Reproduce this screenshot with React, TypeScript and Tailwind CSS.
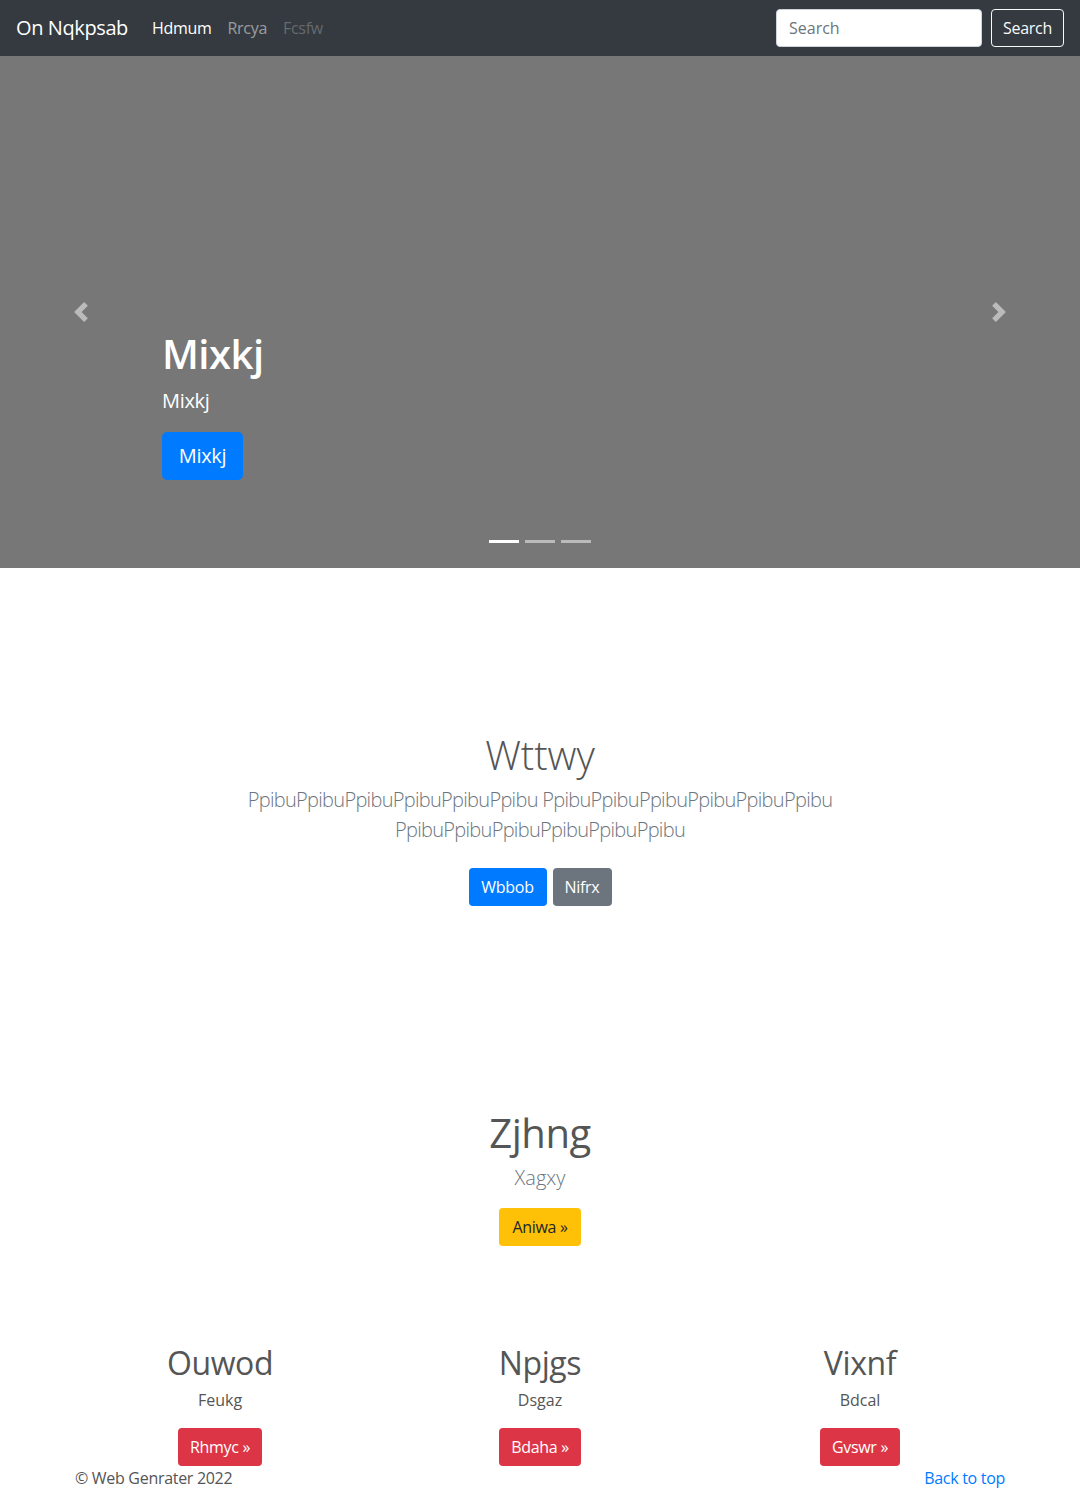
import React from "react";

const font = { fontFamily: '"Open Sans", "Noto Sans", Arial, sans-serif' };

function Chevron({ dir }: { dir: "prev" | "next" }) {
  return (
    <svg width="20" height="20" viewBox="0 0 8 8" fill="#fff">
      {dir === "prev" ? (
        <path d="M5.25 0l-4 4 4 4 1.5-1.5L4.25 4l2.5-2.5L5.25 0z" />
      ) : (
        <path d="M2.75 0l-1.5 1.5L3.75 4l-2.5 2.5L2.75 8l4-4-4-4z" />
      )}
    </svg>
  );
}

export default function App() {
  const cols = [
    { title: "Ouwod", text: "Feukg", btn: "Rhmyc" },
    { title: "Npjgs", text: "Dsgaz", btn: "Bdaha" },
    { title: "Vixnf", text: "Bdcal", btn: "Gvswr" },
  ];

  return (
    <div className="w-[1080px] bg-white text-[#212529]" style={font}>
      {/* navbar */}
      <nav className="h-14 bg-[#343a40] flex items-center px-4">
        <a className="text-white text-[20px] leading-[30px] mr-4 tracking-[-0.4px]">On Nqkpsab</a>
        <div className="flex items-center text-[16px] tracking-[-0.3px]">
          <a className="px-2 text-white">Hdmum</a>
          <a className="px-2 text-white/50">Rrcya</a>
          <a className="px-2 text-white/25">Fcsfw</a>
        </div>
        <div className="ml-auto flex items-center">
          <input
            placeholder="Search"
            className="w-[206px] h-[38px] rounded bg-white px-3 text-[16px] border border-[#ced4da] placeholder:text-[#6c757d] outline-none"
          />
          <button className="ml-[9px] w-[73px] h-[38px] rounded border border-[#f8f9fa] text-[#f8f9fa] text-[16px] tracking-[-0.3px]">
            Search
          </button>
        </div>
      </nav>

      {/* carousel */}
      <div className="relative h-[512px] bg-[#777777]">
        <div className="absolute left-0 top-0 bottom-0 w-[15%] flex items-center justify-center opacity-50">
          <Chevron dir="prev" />
        </div>
        <div className="absolute right-0 top-0 bottom-0 w-[15%] flex items-center justify-center opacity-50">
          <Chevron dir="next" />
        </div>
        <div className="absolute left-[15%] right-[15%] bottom-[68px] pt-5 pb-5 text-white">
          <h1 className="text-[40px] leading-[48px] font-semibold mb-2 tracking-[-0.5px]">Mixkj</h1>
          <p className="text-[20px] leading-[30px] mb-4 tracking-[-0.3px]">Mixkj</p>
          <a className="inline-block bg-[#007bff] rounded-[5px] w-[81px] text-center h-12 leading-[48px] text-[20px] tracking-[-0.3px]">
            Mixkj
          </a>
        </div>
        <div className="absolute bottom-[25px] left-0 right-0 flex justify-center gap-[6px]">
          <span className="block w-[30px] h-[3px] bg-white" />
          <span className="block w-[30px] h-[3px] bg-white/50" />
          <span className="block w-[30px] h-[3px] bg-white/50" />
        </div>
      </div>

      {/* hero */}
      <section className="pt-[163px] text-center">
        <h1 className="text-[40px] leading-[48px] font-light text-[#555] mb-[6px]">Wttwy</h1>
        <p className="max-w-[700px] mx-auto text-[20px] leading-[30px] font-light text-[#6c757d] mb-[23px] tracking-[-0.7px]">
          PpibuPpibuPpibuPpibuPpibuPpibu PpibuPpibuPpibuPpibuPpibuPpibu
          PpibuPpibuPpibuPpibuPpibuPpibu
        </p>
        <div className="flex justify-center gap-[6px] tracking-[-0.3px]">
          <a className="h-[38px] leading-[38px] w-[78px] rounded bg-[#007bff] text-white text-[16px]">Wbbob</a>
          <a className="h-[38px] leading-[38px] w-[59px] rounded bg-[#6c757d] text-white text-[16px]">Nifrx</a>
        </div>
      </section>

      {/* feature */}
      <section className="pt-[203px] text-center">
        <h1 className="text-[40px] leading-[48px] font-medium text-[#555] mb-[6px] tracking-[-0.5px]">Zjhng</h1>
        <p className="text-[20px] leading-[30px] font-light text-[#6c757d] mb-[15px]">Xagxy</p>
        <a className="inline-block h-[38px] leading-[38px] w-[82px] rounded bg-[#ffc107] text-[#212529] text-[16px] tracking-[-0.3px]">
          Aniwa »
        </a>
      </section>

      {/* columns */}
      <section className="pt-[98px] w-[960px] mx-auto grid grid-cols-3">
        {cols.map((c) => (
          <div key={c.title} className="px-[15px] text-center">
            <h2 className="text-[32px] leading-[38px] font-medium text-[#555] mb-[6px] tracking-[-0.4px]">{c.title}</h2>
            <p className="text-[16px] leading-6 text-[#555] mb-4">{c.text}</p>
            <a className="inline-block h-[38px] leading-[38px] px-3 rounded bg-[#dc3545] text-white text-[16px] tracking-[-0.3px]">
              {c.btn} »
            </a>
          </div>
        ))}
      </section>

      {/* footer */}
      <footer className="w-[960px] mx-auto px-[15px] flex justify-between text-[16px] leading-6 tracking-[-0.3px]">
        <p className="text-[#555]">© Web Genrater 2022</p>
        <a className="text-[#007bff]">Back to top</a>
      </footer>
    </div>
  );
}
